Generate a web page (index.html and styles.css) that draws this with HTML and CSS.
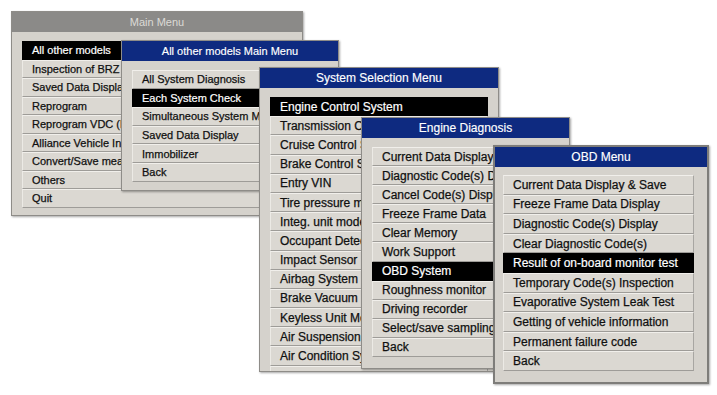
FILE: index.html
```html
<!DOCTYPE html>
<html lang="en">
<head>
    <meta charset="UTF-8">
    <meta name="viewport" content="width=device-width, initial-scale=1.0">
    <title>Diagnosis Menus</title>
    <link rel="stylesheet" href="styles.css">
</head>
<body>

<div class="desktop">

    <div class="window main-menu">
        <div class="title title-gray">Main Menu</div>
        <div class="list">
            <div class="row selected">All other models</div>
            <div class="row">Inspection of BRZ</div>
            <div class="row">Saved Data Display</div>
            <div class="row">Reprogram</div>
            <div class="row">Reprogram VDC (ESC)</div>
            <div class="row">Alliance Vehicle Inspection</div>
            <div class="row">Convert/Save measured data</div>
            <div class="row">Others</div>
            <div class="row">Quit</div>
        </div>
    </div>

    <div class="window models-menu">
        <div class="title">All other models Main Menu</div>
        <div class="list">
            <div class="row">All System Diagnosis</div>
            <div class="row selected">Each System Check</div>
            <div class="row">Simultaneous System Monitor</div>
            <div class="row">Saved Data Display</div>
            <div class="row">Immobilizer</div>
            <div class="row">Back</div>
        </div>
    </div>

    <div class="window system-menu">
        <div class="title">System Selection Menu</div>
        <div class="list">
            <div class="row selected">Engine Control System</div>
            <div class="row">Transmission Control System</div>
            <div class="row">Cruise Control System</div>
            <div class="row">Brake Control System</div>
            <div class="row">Entry VIN</div>
            <div class="row">Tire pressure monitor</div>
            <div class="row">Integ. unit mode</div>
            <div class="row">Occupant Detection</div>
            <div class="row">Impact Sensor</div>
            <div class="row">Airbag System</div>
            <div class="row">Brake Vacuum</div>
            <div class="row">Keyless Unit Mode</div>
            <div class="row">Air Suspension</div>
            <div class="row">Air Condition System</div>
            <div class="row"></div>
        </div>
    </div>

    <div class="window engine-menu">
        <div class="title">Engine Diagnosis</div>
        <div class="list">
            <div class="row">Current Data Display &amp; Save</div>
            <div class="row">Diagnostic Code(s) Display</div>
            <div class="row">Cancel Code(s) Display</div>
            <div class="row">Freeze Frame Data</div>
            <div class="row">Clear Memory</div>
            <div class="row">Work Support</div>
            <div class="row selected">OBD System</div>
            <div class="row">Roughness monitor</div>
            <div class="row">Driving recorder</div>
            <div class="row">Select/save sampling data</div>
            <div class="row">Back</div>
        </div>
    </div>

    <div class="window obd-menu">
        <div class="title">OBD Menu</div>
        <div class="list">
            <div class="row">Current Data Display &amp; Save</div>
            <div class="row">Freeze Frame Data Display</div>
            <div class="row">Diagnostic Code(s) Display</div>
            <div class="row">Clear Diagnostic Code(s)</div>
            <div class="row selected">Result of on-board monitor test</div>
            <div class="row">Temporary Code(s) Inspection</div>
            <div class="row">Evaporative System Leak Test</div>
            <div class="row">Getting of vehicle information</div>
            <div class="row">Permanent failure code</div>
            <div class="row">Back</div>
        </div>
    </div>

</div>

</body>
</html>
```

FILE: styles.css
```css
body, html {
    margin: 0;
    padding: 0;
    background: #ffffff;
}

.desktop {
    position: relative;
    width: 717px;
    height: 395px;
    overflow: hidden;
    font-family: "Liberation Sans", Arial, sans-serif;
    font-size: 11px;
}

/* each menu is a window lying on the desktop */
.window {
    position: absolute;
    box-sizing: border-box;
    display: flex;
    flex-direction: column;
    background: #d5d2cc;
    border: 1px solid #8e8c88;
    box-shadow: 1px 1px 2px rgba(0, 0, 0, 0.35);
    overflow: hidden;
}

.title {
    flex: none;
    height: 20px;
    line-height: 20px;
    text-align: center;
    color: #ffffff;
    background: #0e2a80;
    -webkit-text-stroke: 0.15px #ffffff;
}

.title-gray {
    background: #8b8a88;
    color: #dcdad6;
    -webkit-text-stroke: 0;
}

.list {
    display: flex;
    flex-direction: column;
    padding: 9px 10px 0 10px;
}

.row {
    flex: none;
    box-sizing: border-box;
    padding-left: 9px;
    white-space: nowrap;
    overflow: hidden;
    color: #101010;
    -webkit-text-stroke: 0.25px #101010;
    background: #dbd8d2;
    border-top: 1px solid #f1efeb;
    border-left: 1px solid #eceae5;
    border-bottom: 1px solid #9e9c98;
    border-right: 1px solid #a8a6a2;
    display: flex;
    align-items: center;
}

.row.selected {
    background: #000000;
    color: #ffffff;
    -webkit-text-stroke: 0.2px #ffffff;
    border-color: #000000;
}

.main-menu {
    left: 11px;
    top: 11px;
    width: 292px;
    height: 205px;
}

.main-menu .row {
    height: 18.5px;
}

.models-menu {
    left: 121px;
    top: 40px;
    width: 218px;
    height: 151px;
}

.models-menu .row {
    height: 18.6px;
}

.system-menu {
    left: 259px;
    top: 67px;
    width: 240px;
    height: 305px;
    font-size: 12px;
}

.system-menu .row {
    height: 19.2px;
}

.engine-menu {
    left: 361px;
    top: 117px;
    width: 209px;
    height: 252px;
    font-size: 12px;
}

.engine-menu .row {
    height: 19.1px;
}

.obd-menu {
    left: 493px;
    top: 145px;
    width: 216px;
    height: 239px;
    font-size: 12px;
    border: 2px solid #7e7d7a;
}

.obd-menu .list {
    padding: 8px 13px 0 8px;
}

.obd-menu .row {
    height: 19.6px;
}
```
